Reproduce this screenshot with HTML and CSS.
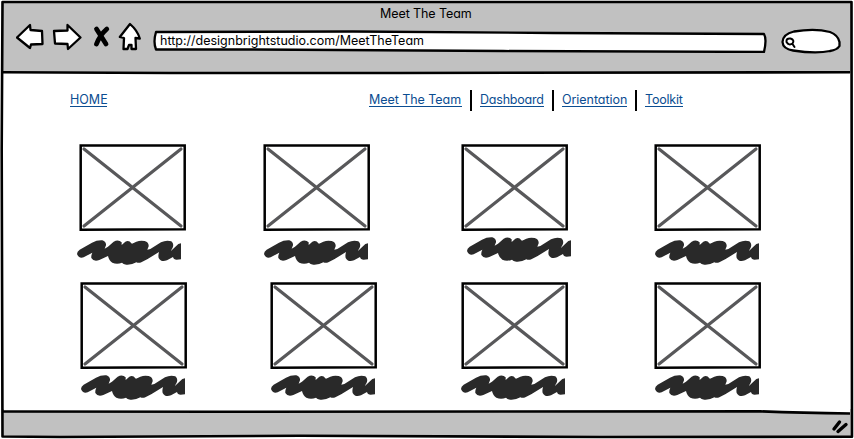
FILE: index.html
```html
<!DOCTYPE html>
<html lang="en">
<head>
<meta charset="utf-8">
<title>Meet The Team</title>
<link rel="stylesheet" href="styles.css">
</head>
<body>
<svg class="symbols" aria-hidden="true">
  <symbol id="picture" viewBox="0 0 107 87">
    <path d="M1.7 1.5H105.7V85.3L1.7 85.7Z" fill="#fff" stroke="#000" stroke-width="2.5"/>
    <path d="M5 5L102 82M5 82L102 5" fill="none" stroke="#58585a" stroke-width="3.200" stroke-linecap="round"/>
  </symbol>
  <symbol id="scribble" viewBox="0 0 312 75">
    <path d="M0 42Q0 34 8 29L45 8Q60 0 76 1Q88 5 87 16L83 26L93 20L110 5Q124 -3 134 7L134 15L145 5Q156 -1 163 10L165 11L178 5Q190 0 203 3Q216 7 215 19L211 29L220 27L252 7Q268 -1 283 4Q292 11 287 23L281 34L304 12L312 10V58L299 59Q290 59 288 51L270 61Q252 68 245 54Q243 46 246 36L212 57L193 67Q185 70 178 67Q165 75 148 74Q138 73 135 68Q120 74 106 68Q96 62 93 48L67 60Q50 66 43 54Q42 46 46 38L20 52Q5 56 0 42Z" fill="#292929"/>
  </symbol>
</svg>
<div class="browser">
  <header class="chrome">
    <div class="title">Meet The Team</div>
    <div class="toolbar">
      <svg class="buttons" viewBox="0 0 128 32" width="128" height="32">
        <g fill="#fff" stroke="#000" stroke-width="2.300" stroke-linejoin="round">
          <path d="M1 16.500L14 4L14.500 9L26 10L26.500 23L15 23.500L14 27Z"/>
          <path d="M38 10L51.500 9.500V4L64.500 16.500L52 28L51.500 23L39 22.500Z"/>
          <path d="M114 3L103.800 16L108 17L107.500 28H111.500L113 24L115.500 24V28H120L119.500 17L123.800 17.500Q121.500 9.500 114 3Z"/>
        </g>
        <path d="M80.500 8L90 23M90.800 8Q84 14 80.500 23" fill="none" stroke="#000" stroke-width="4.800" stroke-linecap="round"/>
      </svg>
      <div class="address">
        <svg class="shape" viewBox="0 0 614 24" width="614" height="24">
          <path d="M3 3L200 2.500L400 4L611 5Q614 10 611 23L350 22L100 20.500L3 20.500Q0 13 3 3Z" fill="#fff" stroke="#000" stroke-width="2.300" stroke-linejoin="round"/>
        </svg>
        <span class="url">http://designbrightstudio.com/MeetTheTeam</span>
      </div>
      <svg class="search" viewBox="0 0 62 26" width="62" height="26">
        <path d="M13 22.500Q3 21 2.500 14Q3 6 14 3.500Q35 0 50 4Q58 7 59.500 14V18Q57 22 50 23Q36 26 13 22.500Z" fill="#fff" stroke="#000" stroke-width="2.300"/>
        <path d="M10.500 10.500Q6 10 6.500 14Q9 18 12.500 15.500Q15 12 10.500 10.500ZM12.500 16L14.500 19" fill="none" stroke="#000" stroke-width="2" stroke-linecap="round"/>
      </svg>
    </div>
  </header>
  <main class="page">
    <nav class="nav">
      <a class="home">HOME</a>
      <a class="team">Meet The Team</a>
      <a class="dashboard">Dashboard</a>
      <a class="orientation">Orientation</a>
      <a class="toolkit">Toolkit</a>
    </nav>
    <section class="members members-top">
      <div class="member"><svg class="photo"><use href="#picture"/></svg><svg class="name"><use href="#scribble"/></svg></div>
      <div class="member"><svg class="photo"><use href="#picture"/></svg><svg class="name"><use href="#scribble"/></svg></div>
      <div class="member"><svg class="photo"><use href="#picture"/></svg><svg class="name"><use href="#scribble"/></svg></div>
      <div class="member"><svg class="photo"><use href="#picture"/></svg><svg class="name"><use href="#scribble"/></svg></div>
    </section>
    <section class="members members-bottom">
      <div class="member"><svg class="photo"><use href="#picture"/></svg><svg class="name"><use href="#scribble"/></svg></div>
      <div class="member"><svg class="photo"><use href="#picture"/></svg><svg class="name"><use href="#scribble"/></svg></div>
      <div class="member"><svg class="photo"><use href="#picture"/></svg><svg class="name"><use href="#scribble"/></svg></div>
      <div class="member"><svg class="photo"><use href="#picture"/></svg><svg class="name"><use href="#scribble"/></svg></div>
    </section>
  </main>
  <footer class="status"></footer>
  <svg class="outline" viewBox="0 0 854 439" width="854" height="439">
    <path d="M4 411.500L220 411L500 411.200L760 411Q800 413 850 413.500V408H4Z" fill="#fff"/>
    <g fill="none" stroke="#000" stroke-width="2.600" stroke-linejoin="round">
      <path d="M2.500 2H851.500L852 436.800L600 437L300 435.800L60 437L2.500 436.500L1.700 150Z"/>
      <path d="M3 72.300L170 73L400 73L850 72.200"/>
      <path d="M3 411.500L220 411.800L500 411.500L760 411.300Q800 413 850 413.500"/>
    </g>
    <path d="M834 429L839.500 422M838 431.500L846 424.500" stroke="#000" stroke-width="3.400" stroke-linecap="round"/>
  </svg>
</div>
</body>
</html>
```
FILE: styles.css
```css
* { box-sizing: border-box; }
body {
  margin: 0;
  background: #fff;
  font: 12.5px/16px Inter, "Liberation Sans", sans-serif;
  font-feature-settings: "cv11", "ss03";
  color: #000;
}
.symbols { display: none; }
.browser {
  position: relative;
  display: flex;
  flex-direction: column;
  width: 854px;
  height: 439px;
  padding: 2px;
  overflow: hidden;
}
.chrome {
  flex: none;
  height: 71px;
  padding-top: 4px;
  background: #c1c1c1;
}
.title {
  width: 92px;
  margin-left: 378px;
  letter-spacing: -0.08px;
  white-space: nowrap;
}
.toolbar { display: flex; align-items: flex-start; }
.buttons { margin-left: 14px; margin-top: -1px; }
.address {
  position: relative;
  width: 614px;
  height: 24px;
  margin: 7px 0 0 9px;
}
.shape { display: block; }
.url {
  position: absolute;
  left: 7px;
  top: 4px;
  white-space: nowrap;
}
.search { margin: 6px 0 0 13px; }
.page { flex: 1; }
.nav {
  display: flex;
  height: 20px;
  margin: 17px 0 0 68px;
}
.nav a {
  height: 16px;
  margin-top: 1px;
  border-bottom: 1px solid #0b4d91;
  color: #0b4d91;
  line-height: 18px;
  letter-spacing: -0.05px;
  white-space: nowrap;
}
.nav .home { width: 37px; margin-right: 262px; letter-spacing: 0; }
.nav .team { width: 93px; }
.nav .dashboard { width: 64px; letter-spacing: -0.2px; }
.nav .orientation { width: 65px; }
.nav .toolkit { width: 38px; letter-spacing: -0.2px; }
.nav .team, .nav .dashboard, .nav .orientation { margin-right: 18px; position: relative; }
.nav .team::after, .nav .dashboard::after, .nav .orientation::after {
  content: "";
  position: absolute;
  right: -10px;
  top: -1px;
  width: 2px;
  height: 21px;
  background: #000;
}
.members { display: flex; }
.members-top { margin: 34px 0 0 77px; height: 138px; }
.members-bottom { margin-left: 78px; }
.member { width: 107px; }
.photo { display: block; width: 107px; height: 87px; }
.name { display: block; width: 104px; height: 25px; margin-top: 9px; }
.members-top .member:nth-child(1) { margin-right: 77px; }
.members-top .member:nth-child(2) { margin-right: 91px; }
.members-top .member:nth-child(3) { margin-right: 86px; }
.members-bottom .member:nth-child(1) { margin-right: 83px; }
.members-bottom .member:nth-child(2) { margin-right: 84px; }
.members-bottom .member:nth-child(3) { margin-right: 86px; }
.members-top .member:nth-child(1) .name { margin-left: -2px; }
.members-top .member:nth-child(2) .name { margin-left: 1px; }
.members-top .member:nth-child(3) .name { margin-left: 6px; margin-top: 6px; }
.member:nth-child(4) .name { margin-left: 1px; }
.members-bottom .name { margin-top: 6px; }
.members-bottom .member:nth-child(1) .name,
.members-bottom .member:nth-child(2) .name { margin-left: 1px; }
.status { flex: none; height: 28px; background: #c1c1c1; }
.outline { position: absolute; left: 0; top: 0; }
```
